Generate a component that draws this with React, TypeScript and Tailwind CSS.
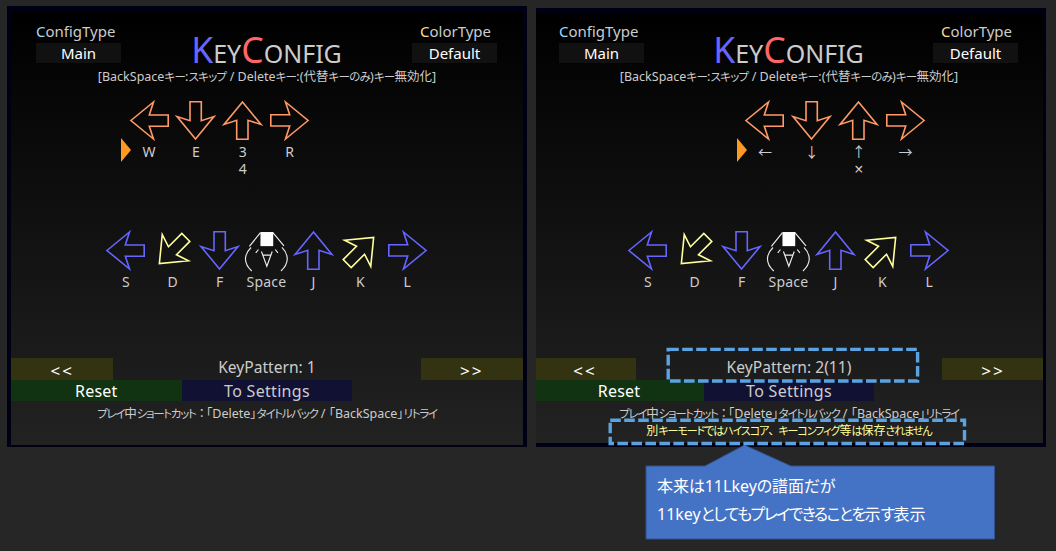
import React from "react";
import clsx from "clsx";

type Direction = "left" | "down" | "up" | "right" | "downLeft" | "upRight";
type Tone = "orange" | "blue" | "yellow";

const ROTATION: Record<Direction, number> = {
  left: 0,
  downLeft: -45,
  down: -90,
  up: 90,
  upRight: 135,
  right: 180,
};

const TONE: Record<Tone, string> = {
  orange: "text-[#ff9966]",
  blue: "text-[#6666ff]",
  yellow: "text-[#ffff99]",
};

/** Sets kana runs tighter than the Latin and kanji around them. */
function Mixed({ text, kana }: { text: string; kana: string }) {
  const runs = text.split(/([\u3041-\u30ff]+|[：、])/).filter(Boolean);
  return (
    <span>
      {runs.map((run, i) => {
        if (/^[：、]/.test(run)) {
          return (
            <span key={i} className="tracking-[-2px] [font-feature-settings:normal]">
              {run}
            </span>
          );
        }
        return (
          <span key={i} className={/^[\u3041-\u30ff]/.test(run) ? kana : undefined}>
            {run}
          </span>
        );
      })}
    </span>
  );
}

function Arrow({ dir, tone }: { dir: Direction; tone: Tone }) {
  return (
    <svg viewBox="0 0 39 39" className={clsx("h-[39px] w-[39px] overflow-visible", TONE[tone])}>
      <path
        d="M0.9 19.5 L23.5 1 L19.3 14 L38.2 14 L38.2 25.3 L19.3 25.3 L23.5 38 Z"
        transform={`rotate(${ROTATION[dir]} 19.5 19.5)`}
        fill="none"
        stroke="currentColor"
        strokeWidth="1.6"
      />
    </svg>
  );
}

function Giko() {
  return (
    <svg viewBox="470 32 134 122" className="h-[41px] w-[45px] shrink-0 overflow-visible">
      <g fill="none" stroke="#eeeeee" strokeWidth="3.4">
        <path d="M519 37 L486 78 M491 81 C468 103 469 130 493 151" />
        <path d="M556 37 L589 76 M583 81 C605 103 604 130 580 151" />
        <path d="M505 97 L513 87 M563 87 L571 97" />
        <path d="M522 93 L538 137 L554 93 M526 104 L550 104" />
      </g>
      <rect x="519" y="35" width="38" height="42" fill="#fff" />
    </svg>
  );
}

interface KeyItem {
  icon: React.ReactNode;
  label: string;
  alt?: string;
}

function KeyRow({ items, symbol }: { items: KeyItem[]; symbol?: boolean }) {
  return (
    <div className="flex">
      {items.map((k, i) => (
        <div key={i} className="flex w-[46.9px] shrink-0 flex-col items-center">
          <div className="flex h-[39px] items-start justify-center">{k.icon}</div>
          <div
            className={clsx(
              "flex h-[22px] items-center text-[14px]",
              symbol && "font-['Noto_Sans_CJK_JP'] [font-feature-settings:normal]",
              k.label === "Space" && "tracking-[0.2px]",
            )}
          >
            {k.label}
          </div>
          {k.alt && (
            <div className={clsx("-mt-[2px] flex h-[17px] items-center", symbol ? "text-[16px]" : "text-[14px]")}>{k.alt}</div>
          )}
        </div>
      ))}
    </div>
  );
}

function TypeSelect({ initial, rest, value, accent }: { initial: string; rest: string; value: string; accent: string }) {
  return (
    <div className="w-[85px] whitespace-nowrap">
      <div className={clsx("flex h-[21px] items-center pb-[2px] text-[15px]", value === "Default" && "pl-[8px]")}>
        <span className={accent}>{initial}</span>
        {rest}
      </div>
      <div className="flex h-[20px] items-center justify-center bg-[#111] pt-[1px] text-[15px] text-white">{value}</div>
    </div>
  );
}

const LOWER: KeyItem[] = [
  { icon: <Arrow dir="left" tone="blue" />, label: "S" },
  { icon: <Arrow dir="downLeft" tone="yellow" />, label: "D" },
  { icon: <Arrow dir="down" tone="blue" />, label: "F" },
  { icon: <Giko />, label: "Space" },
  { icon: <Arrow dir="up" tone="blue" />, label: "J" },
  { icon: <Arrow dir="upRight" tone="yellow" />, label: "K" },
  { icon: <Arrow dir="right" tone="blue" />, label: "L" },
];

function upper(labels: string[], alt: string): KeyItem[] {
  const dirs: Direction[] = ["left", "down", "up", "right"];
  return dirs.map((d, i) => ({
    icon: <Arrow dir={d} tone="orange" />,
    label: labels[i],
    alt: i === 2 ? alt : undefined,
  }));
}

interface ScreenProps {
  labels: string[];
  alt: string;
  pattern: string;
  second?: boolean;
}

function ConfigScreen({ labels, alt, pattern, second }: ScreenProps) {
  return (
    <div className="flex flex-col whitespace-nowrap">
      <header className={clsx("flex justify-between pl-[25px]", second ? "h-[55px] pt-[9px] pr-[26px]" : "h-[56px] pt-[10px] pr-[26px]")}>
        <TypeSelect initial="C" rest="onfigType" value="Main" accent="text-[#99ddff]" />
        <h1 className="mt-[5px] flex items-baseline leading-[44px]">
          <span className="text-[35.5px] text-[#6666ff]">K</span>
          <span className="text-[25px]">EY</span>
          <span className="text-[35.5px] text-[#ff6666]">C</span>
          <span className="text-[25px]">ONFIG</span>
        </h1>
        <TypeSelect initial="C" rest="olorType" value="Default" accent="text-[#ffdd88]" />
      </header>
      <div className="flex h-[20px] items-center justify-center pb-[2px] text-[12.5px]">
        <Mixed text="[BackSpaceキー:スキップ / Deleteキー:(代替キーのみ)キー無効化]" kana="text-[11.5px] tracking-[-0.7px]" />
      </div>
      <div className={clsx("flex h-[130px] pt-[13px]", second ? "pl-[207.5px]" : "pl-[114.6px]")}>
        <svg viewBox="0 0 10 24" className="-ml-[5px] mt-[37px] mr-[-5px] h-[24px] w-[10px] shrink-0">
          <path d="M0 0 L10 12 L0 24 Z" fill="#ff9922" />
        </svg>
        <KeyRow items={upper(labels, alt)} symbol={second} />
      </div>
      <div className="flex h-[140px] justify-center pt-[13px] pr-[1px]">
        <KeyRow items={LOWER} />
      </div>
      <div className="flex h-[22px] items-center justify-between text-[16px]">
        <div className="flex h-full w-1/5 items-center justify-center bg-[#333311] pt-[3px] text-[17px] tracking-[2px] text-white">&lt;&lt;</div>
        <div className="pb-[2px] text-[15.6px]">KeyPattern: {pattern}</div>
        <div className="flex h-full w-1/5 items-center justify-center bg-[#333311] pt-[3px] text-[17px] tracking-[2px] text-white">&gt;&gt;</div>
      </div>
      <div className="flex h-[21px] text-[16px]">
        <div className="flex w-1/3 items-center justify-center bg-[#113311] pt-[1px] tracking-[0.2px] text-white">Reset</div>
        <div className="flex w-1/3 items-center justify-center bg-[#111133] pt-[1px] tracking-[0.3px]">To Settings</div>
      </div>
      <div className="flex h-[25px] items-center justify-center pt-[1px] text-[12.5px]">
        <Mixed text="プレイ中ショートカット：「Delete」タイトルバック / 「BackSpace」リトライ" kana="text-[11.5px] tracking-[-1.3px]" />
      </div>
      {second && (
        <div className="-mt-[4px] flex h-[17px] items-center justify-center text-[12px] text-[#ffff99]">
          <Mixed text="別キーモードではハイスコア、キーコンフィグ等は保存されません" kana="text-[11px] tracking-[-1.05px]" />
        </div>
      )}
    </div>
  );
}

export default function App() {
  return (
    <div className="relative flex h-[551px] w-[1056px] items-start overflow-hidden bg-[#262626] font-['Noto_Sans','Noto_Sans_CJK_JP',sans-serif] text-[#cccccc] [font-feature-settings:'palt']">
      <section className="mt-[6px] ml-[7px] h-[441px] w-[520px] border-t-[6px] border-r-[4px] border-b-2 border-l-[4px] border-[#000014] bg-linear-to-b/srgb from-black to-[#222222]">
        <ConfigScreen labels={["W", "E", "3", "R"]} alt="4" pattern="1" />
      </section>
      <section className="mt-[8px] ml-[9px] h-[439px] w-[510px] overflow-hidden border-t-[5px] border-r-[3px] border-b-4 border-[#000014] bg-linear-to-b/srgb from-black to-[#222222]">
        <div className="-ml-[2px] w-[510px]">
          <ConfigScreen labels={["←", "↓", "↑", "→"]} alt="×" pattern="2(11)" second />
        </div>
      </section>

      <svg className="absolute top-[347px] left-[606px] h-[196px] w-[392px]" viewBox="606 347 392 196">
        <path d="M646 466 H705 L744.5 445 L791 466 H994.5 V539 H646 Z" fill="#4472c4" stroke="#2f528f" strokeWidth="1" />
        <g fill="none" stroke="#5ba3e0" strokeWidth="3.4" strokeDasharray="10.6 3.4">
          <rect x="668.2" y="349.4" width="249.4" height="31.6" />
          <rect x="610.2" y="420.3" width="354.3" height="23.2" />
        </g>
      </svg>
      <div className="absolute top-[472px] left-[657px] text-[16px] leading-[28px] whitespace-nowrap text-white">
        <p>
          <Mixed text="本来は11Lkeyの譜面だが" kana="tracking-[-0.3px]" />
        </p>
        <p>
          <Mixed text="11keyとしてもプレイできることを示す表示" kana="tracking-[-1.6px]" />
        </p>
      </div>
    </div>
  );
}
